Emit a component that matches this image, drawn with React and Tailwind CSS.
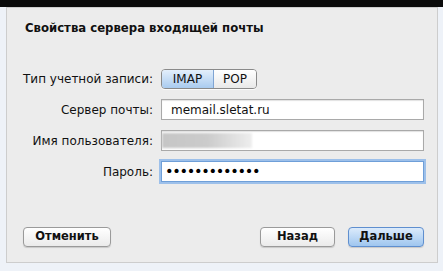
export default function App() {
  const font = { fontFamily: '"DejaVu Sans", "Liberation Sans", sans-serif' };
  return (
    <div className="w-[443px] h-[271px] bg-[#eef2f8] flex flex-col overflow-hidden" style={font}>
      <div className="h-[7px] bg-[#0b0b0b] shrink-0" />
      <div className="mx-[6px] w-[432px] h-[256px] border border-[#cdcdcd] bg-[#ececec] flex flex-col">
        <div className="pt-[12px] pl-[18px] text-[11.7px] leading-[16px] font-bold text-[#111]">
          Свойства сервера входящей почты
        </div>
        <div className="mt-[32px] flex flex-col gap-[10px] text-[12px] text-[#111]">
          <div className="flex items-center h-[21px]">
            <div className="w-[146px] text-right">Тип учетной записи:</div>
            <div className="ml-[8px] flex h-[20px] w-[96px] rounded-[4px] border border-[#8a8a8a] overflow-hidden shadow-[0_1px_0_rgba(255,255,255,0.8)]">
              <div className="w-[52px] flex items-center justify-center bg-gradient-to-b from-[#e4effb] to-[#a9cbef] border-r border-[#7fa4d3] text-[#111]">IMAP</div>
              <div className="flex-1 flex items-center justify-center bg-gradient-to-b from-[#ffffff] to-[#e9e9e9] text-[#111]">POP</div>
            </div>
          </div>
          <div className="flex items-center h-[21px]">
            <div className="w-[146px] text-right">Сервер почты:</div>
            <div className="ml-[8px] w-[263px] h-[21px] border border-[#a9a9a9] bg-white flex items-center pl-[9px] shadow-[inset_0_1px_1px_rgba(0,0,0,0.12)]">
              memail.sletat.ru
            </div>
          </div>
          <div className="flex items-center h-[21px]">
            <div className="w-[146px] text-right">Имя пользователя:</div>
            <div className="ml-[8px] w-[263px] h-[21px] border border-[#a9a9a9] bg-white flex items-center shadow-[inset_0_1px_1px_rgba(0,0,0,0.12)]">
              <div className="w-[90px] h-[15px] bg-gradient-to-r from-[#c6c6c6] via-[#cbcbcb] to-[#eeeeee] blur-[1px]" />
            </div>
          </div>
          <div className="flex items-center h-[21px]">
            <div className="w-[146px] text-right">Пароль:</div>
            <div className="ml-[8px] w-[263px] h-[21px] border border-[#6f9fd8] bg-white flex items-center pl-[3px] shadow-[0_0_0_2px_#9dc0ea]">
              <span className="text-[14.5px] leading-none tracking-[-1.3px] text-black">•••••••••••••</span>
            </div>
          </div>
        </div>
        <div className="mt-auto mb-[15px] flex items-center px-[16px] pr-[13px] text-[11.5px] font-bold text-[#111]">
          <div className="w-[88px] h-[20px] rounded-[4px] border border-[#9a9a9a] bg-gradient-to-b from-[#ffffff] to-[#ebebeb] flex items-center justify-center shadow-[0_1px_1px_rgba(0,0,0,0.15)]">
            Отменить
          </div>
          <div className="ml-auto w-[75px] h-[20px] rounded-[4px] border border-[#9a9a9a] bg-gradient-to-b from-[#ffffff] to-[#ebebeb] flex items-center justify-center shadow-[0_1px_1px_rgba(0,0,0,0.15)]">
            Назад
          </div>
          <div className="ml-[13px] w-[76px] h-[20px] rounded-[4px] border border-[#5f8fcf] bg-gradient-to-b from-[#dcebfb] to-[#9fc6ef] flex items-center justify-center shadow-[0_1px_1px_rgba(0,0,0,0.15)]">
            Дальше
          </div>
        </div>
      </div>
    </div>
  );
}
